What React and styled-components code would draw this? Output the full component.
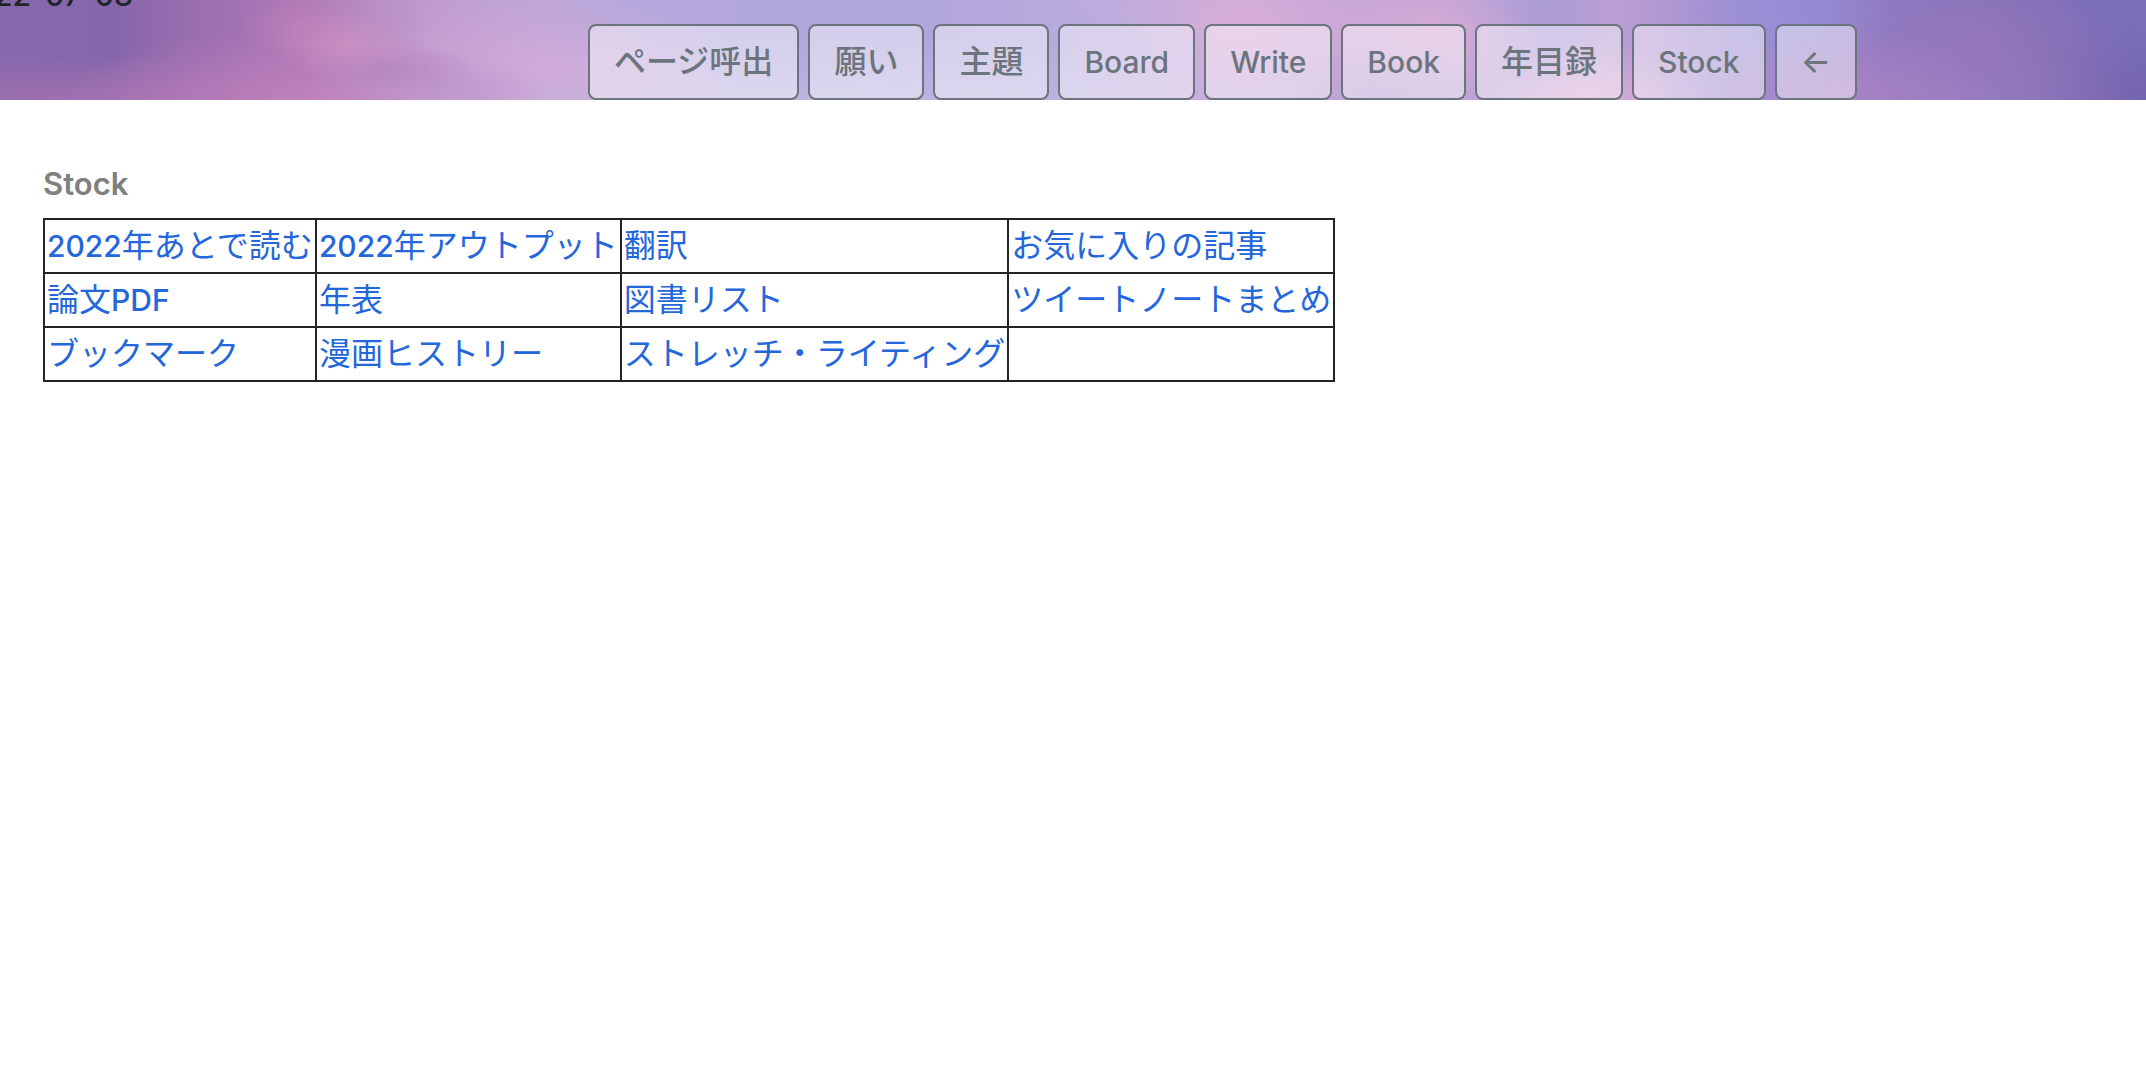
import styled, { createGlobalStyle } from "styled-components";

const GlobalStyle = createGlobalStyle`
  body {
    margin: 0;
    background: #fff;
    color: #212529;
    font-family: Inter, "Noto Sans CJK JP", sans-serif;
    font-size: 32px;
    font-weight: 400;
    line-height: 48px;
  }
`;

const Header = styled.header`
  display: flex;
  flex-direction: column;
  justify-content: flex-end;
  gap: 5px;
  height: 100px;
  overflow: hidden;
  background:
    radial-gradient(ellipse 60px 34px at 14% 25%, rgba(204, 134, 188, 0.5), transparent),
    radial-gradient(ellipse 70px 34px at 16% 45%, rgba(212, 148, 194, 0.6), transparent),
    radial-gradient(ellipse 90px 26px at 18% 68%, rgba(174, 130, 192, 0.6), transparent),
    radial-gradient(ellipse 110px 30px at 21% 88%, rgba(182, 146, 202, 0.5), transparent),
    radial-gradient(ellipse 240px 70px at 14% 100%, rgba(198, 130, 190, 0.7), transparent),
    radial-gradient(ellipse 260px 60px at 4% 115%, rgba(176, 118, 180, 0.8), transparent),
    radial-gradient(ellipse 180px 80px at 26% 70%, rgba(216, 174, 218, 0.7), transparent),
    radial-gradient(ellipse 600px 70px at 38% 110%, rgba(198, 188, 228, 0.7), transparent),
    radial-gradient(ellipse 100px 70px at 52% 45%, rgba(178, 172, 226, 0.6), transparent),
    radial-gradient(ellipse 200px 90px at 58% 25%, rgba(222, 176, 216, 0.7), transparent),
    radial-gradient(ellipse 120px 70px at 67% 35%, rgba(228, 176, 212, 0.7), transparent),
    radial-gradient(ellipse 120px 50px at 74% 95%, rgba(226, 178, 216, 0.8), transparent),
    radial-gradient(ellipse 90px 80px at 71% 20%, rgba(160, 152, 216, 0.8), transparent),
    radial-gradient(ellipse 120px 60px at 83% 10%, rgba(148, 142, 214, 0.8), transparent),
    radial-gradient(ellipse 140px 70px at 86% 95%, rgba(176, 132, 194, 0.7), transparent),
    radial-gradient(ellipse 160px 70px at 92% 45%, rgba(158, 122, 184, 0.6), transparent),
    radial-gradient(ellipse 180px 60px at 91% 100%, rgba(162, 130, 196, 0.6), transparent),
    radial-gradient(ellipse 140px 80px at 100% 10%, rgba(124, 116, 192, 0.8), transparent),
    linear-gradient(
      to right,
      #8868ac 0%,
      #8466aa 5%,
      #9a6eb0 9%,
      #ac78b6 14%,
      #b88cc2 17%,
      #c09cce 20%,
      #bea4d6 25%,
      #b4a8dc 29%,
      #b0a6dc 42%,
      #b8aadc 50%,
      #c8a8d8 58%,
      #b8a0d4 64%,
      #bca4d6 70%,
      #b89cd2 76%,
      #9c8cd0 83%,
      #8c78c2 88%,
      #8672ba 93%,
      #7464ae 100%
    );
`;

const DateLine = styled.div`
  display: flex;
  flex-shrink: 0;
  justify-content: flex-end;
  width: 133px;
  white-space: nowrap;
`;

const Nav = styled.nav`
  display: flex;
  flex-shrink: 0;
  gap: 9px;
  padding-left: 588px;
`;

const NavButton = styled.button`
  padding: 12px 24px;
  border: 2px solid #6c757d;
  border-radius: 8px;
  background: rgba(255, 255, 255, 0.46);
  color: #6c757d;
  font: inherit;
  font-weight: 500;
  white-space: nowrap;
  cursor: pointer;
`;

const Main = styled.main`
  padding: 60px 43px;
`;

const Title = styled.h1`
  margin: 0 0 10px;
  color: gray;
  font-size: 31px;
  font-weight: 600;
`;

const Table = styled.table`
  border-collapse: collapse;
`;

const Cell = styled.td`
  padding: 2px;
  border: 2px solid #212529;
  white-space: nowrap;
`;

const StockLink = styled.a`
  color: #2466dc;
  text-decoration: none;
`;

const Latin = styled.span`
  font-size: 30px;
  font-weight: 500;
`;

// Latin runs are set a little smaller so they sit evenly beside the kana
const Label = ({ text }) =>
  text
    .split(/([\w-]+)/)
    .filter(Boolean)
    .map((part, i) =>
      /^[\w-]/.test(part) ? <Latin key={i}>{part}</Latin> : part
    );

const menus = [
  "ページ呼出",
  "願い",
  "主題",
  "Board",
  "Write",
  "Book",
  "年目録",
  "Stock",
  "←",
];

const stocks = [
  ["2022年あとで読む", "2022年アウトプット", "翻訳", "お気に入りの記事"],
  ["論文PDF", "年表", "図書リスト", "ツイートノートまとめ"],
  ["ブックマーク", "漫画ヒストリー", "ストレッチ・ライティング", ""],
];

const App = () => {
  return (
    <>
      <GlobalStyle />

      <Header>
        <DateLine>
          <Label text="2022-07-08" />
        </DateLine>

        <Nav>
          {menus.map((menu) => (
            <NavButton key={menu} type="button">
              <Label text={menu} />
            </NavButton>
          ))}
        </Nav>
      </Header>

      <Main>
        <Title>Stock</Title>

        <Table>
          <tbody>
            {stocks.map((row, i) => (
              <tr key={i}>
                {row.map((name, j) => (
                  <Cell key={j}>
                    {name && (
                      <StockLink href="#">
                        <Label text={name} />
                      </StockLink>
                    )}
                  </Cell>
                ))}
              </tr>
            ))}
          </tbody>
        </Table>
      </Main>
    </>
  );
};

export default App;
